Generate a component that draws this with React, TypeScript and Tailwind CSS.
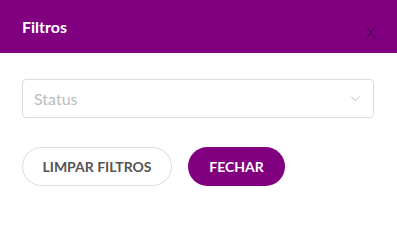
import React from 'react';

function App() {
  return (
    <div className="w-[397px] h-[232px] bg-white font-['Lato',sans-serif]">
      {/* Header */}
      <div className="h-[53px] bg-[#800080] flex items-center justify-between pl-[22px] pr-[21px]">
        <h1 className="text-[16px] font-bold text-white mt-[1px]">Filtros</h1>
        <button className="text-[17px] leading-none text-black/50 mt-[11px] font-light">X</button>
      </div>

      <div className="px-[22px] pt-[26px]">
        {/* Select */}
        <div className="h-[39px] w-[352px] border border-[#dcdcdc] rounded-[4px] flex items-center justify-between pl-[11px] pr-[13px]">
          <span className="text-[16px] text-[#bdbdbd]">Status</span>
          <svg width="9" height="6" viewBox="0 0 9 6" fill="none" stroke="#c4c4c4" strokeWidth="1">
            <path d="M0.5 0.5 L4.5 5 L8.5 0.5" />
          </svg>
        </div>

        {/* Buttons */}
        <div className="flex gap-[16px] mt-[29px]">
          <button className="h-[39px] w-[150px] rounded-full border border-[#dcdcdc] text-[14px] font-bold text-[#555]">
            LIMPAR FILTROS
          </button>
          <button className="h-[39px] w-[97px] rounded-full bg-[#800080] text-[14px] font-bold text-white">
            FECHAR
          </button>
        </div>
      </div>
    </div>
  );
}

export default App;
